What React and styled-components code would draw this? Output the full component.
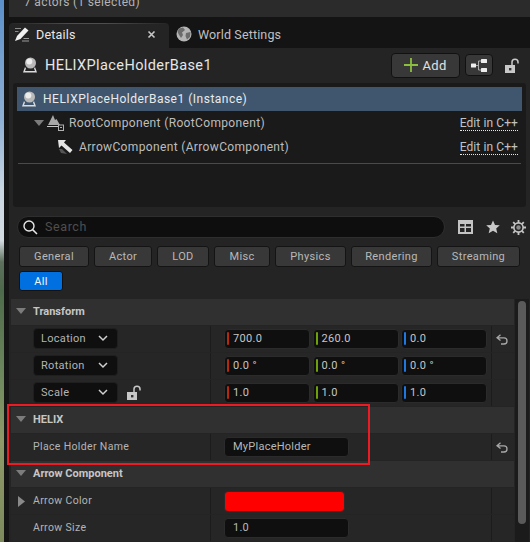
import React from "react";
import styled, { createGlobalStyle } from "styled-components";

const Global = createGlobalStyle`
  html, body { margin: 0; padding: 0; background: #151515; }
  body { font-family: Roboto, "Liberation Sans", sans-serif; width: 530px; height: 542px; overflow: hidden; }
  * { box-sizing: border-box; }
`;

const Page = styled.div`
  position: relative;
  display: flex;
  width: 530px;
  height: 542px;
  overflow: hidden;
`;
const Backdrop = styled.div`
  width: 4px;
  background: linear-gradient(180deg, #5b8fc9 0, #8fb0d4 120px, #c9d6e2 190px, #d5dde2 240px, #5c6f5c 262px, #4d6a4a 290px, #6f8a5e 380px, #8f9a68 440px, #7d8a5c 542px);
`;
const Gutter = styled.div`
  width: 5px;
  background: #151515;
`;
const Main = styled.div`
  flex: 1;
  display: flex;
  flex-direction: column;
  min-width: 0;
`;
const ActorBar = styled.div`
  height: 17px;
  background: #2b2b2b;
  color: #b4b4b4;
  font-size: 12px;
  letter-spacing: 0.3px;
  padding-left: 15px;
  line-height: 4px;
  overflow: hidden;
`;
const TabBar = styled.div`
  height: 31px;
  background: #141414;
  display: flex;
  align-items: flex-end;
`;
const Tab = styled.div`
  height: 25px;
  width: ${p => (p.$active ? 160 : 170)}px;
  display: flex;
  align-items: center;
  padding-left: ${p => (p.$active ? 5 : 7)}px;
  padding-bottom: 3px;
  gap: 6px;
  font-size: 12.5px;
  letter-spacing: ${p => (p.$active ? 0.2 : 0.15)}px;
  color: ${p => (p.$active ? "#e8e8e8" : "#c0c0c0")};
  background: ${p => (p.$active ? "#242424" : "transparent")};
  border-radius: 4px 4px 0 0;
  ${p => p.$active && "background-image: linear-gradient(90deg, #242424 0, #0b5fa8 40%, #0b5fa8 60%, #242424 100%); background-size: 100% 1px; background-repeat: no-repeat; background-color: #242424;"}
`;
const TabClose = styled.span`
  margin-left: auto;
  margin-right: 13px;
  display: flex;
`;
const Panel = styled.div`
  flex: 1;
  background: #242424;
  display: flex;
  flex-direction: column;
  min-height: 0;
`;
const Header = styled.div`
  height: 35px;
  display: flex;
  align-items: center;
  padding: 0 0 1px 12px;
`;
const ActorTitle = styled.div`
  font-size: 14.5px;
  letter-spacing: 0.4px;
  color: #e6e6e6;
  margin-left: 6px;
  flex: 1;
`;
const AddButton = styled.div`
  width: 69px;
  height: 25px;
  border: 1px solid #111;
  border-radius: 4px;
  background: #383838;
  color: #e0e0e0;
  font-size: 13px;
  letter-spacing: 0.3px;
  display: flex;
  align-items: center;
  justify-content: center;
  gap: 4px;
`;
const TreeButton = styled.div`
  width: 28px;
  height: 22px;
  margin-left: 5px;
  border: 1px solid #111;
  border-radius: 4px;
  background: #383838;
  display: flex;
  align-items: center;
  justify-content: center;
`;
const LockSlot = styled.div`
  width: 37px;
  padding-left: 11px;
  display: flex;
  align-items: center;
`;
const Tree = styled.div`
  height: 124px;
  margin: 0 4px;
  background: #1a1a1a;
  border-radius: 3px;
  padding: 4px 4px 0;
`;
const TreeRow = styled.div`
  height: 24px;
  display: flex;
  align-items: center;
  padding-left: ${p => p.$indent}px;
  padding-right: 4px;
  background: ${p => (p.$selected ? "#40566e" : "transparent")};
  color: ${p => (p.$selected ? "#eaeaea" : "#bdbdbd")};
  font-size: 12px;
  letter-spacing: ${p => (p.$selected ? 0.5 : 0.35)}px;
`;
const RowLabel = styled.span`
  flex: 1;
  margin-left: ${p => p.$gap}px;
  padding-bottom: 1px;
`;
const EditLink = styled.span`
  color: #c2c2c2;
  font-size: 12px;
  letter-spacing: 0.1px;
  line-height: 14px;
  border-bottom: 1px dotted #e8e8e8;
`;
const TreeRule = styled.div`
  height: 1px;
  margin: 4px 1px 0;
  background: #4a4a4a;
`;
const SearchRow = styled.div`
  display: flex;
  align-items: center;
  height: 22px;
  margin: 9px 0 0 8px;
`;
const SearchBox = styled.div`
  width: 428px;
  height: 22px;
  border-radius: 11px;
  background: #0e0e0e;
  border: 1px solid #2e2e2e;
  display: flex;
  align-items: center;
  padding-left: 5px;
  gap: 7px;
  color: #4e4e4e;
  font-size: 12.5px;
  letter-spacing: 0.6px;
`;
const SearchHint = styled.span`
  padding-bottom: 2px;
`;
const SearchTools = styled.div`
  display: flex;
  align-items: center;
  margin-left: 13px;
  gap: 13px;
`;
const Filters = styled.div`
  display: flex;
  flex-wrap: wrap;
  gap: 4px 5px;
  margin: 8px 0 0 10px;
`;
const FilterChip = styled.div`
  width: ${p => p.$w}px;
  height: ${p => (p.$on ? 20 : 21)}px;
  border-radius: 3px;
  border: 1px solid ${p => (p.$on ? "#111" : "#141414")};
  background: ${p => (p.$on ? "#0070e0" : "#383838")};
  color: ${p => (p.$on ? "#f4f4f4" : "#b8b8b8")};
  font-size: 11px;
  letter-spacing: 0.35px;
  display: flex;
  align-items: center;
  justify-content: center;
`;
const ListWrap = styled.div`
  flex: 1;
  display: flex;
  margin: 8px 0 0 2px;
  min-height: 0;
`;
const List = styled.div`
  width: 503px;
  display: flex;
  flex-direction: column;
  gap: 1px;
`;
const Track = styled.div`
  width: 14px;
  background: #1b1b1b;
  padding: 2px 3px 0;
  margin-left: 1px;
`;
const Thumb = styled.div`
  width: 8px;
  height: 223px;
  border-radius: 4px;
  background: #5a5a5a;
`;
const Section = styled.div`
  height: 26px;
  background: #303030;
  display: flex;
  align-items: center;
  padding: 0 0 2px 5px;
  gap: 7px;
  color: #c6c6c6;
  font-size: 11px;
  font-weight: 700;
  letter-spacing: 0;
`;
const Row = styled.div`
  height: 26px;
  display: grid;
  grid-template-columns: 200px 280px 23px;
  background: #262626;
  flex: none;
`;
const LabelCell = styled.div`
  position: relative;
  display: flex;
  align-items: center;
  padding: 0 0 1px 22px;
  gap: 8px;
  color: #b4b4b4;
  font-size: 10.5px;
  letter-spacing: 0.35px;
  border-right: 1px solid #1c1c1c;
`;
const Expander = styled.span`
  position: absolute;
  left: 7px;
  top: 8px;
  display: flex;
`;
const ValueCell = styled.div`
  display: flex;
  align-items: center;
  padding-left: 13px;
  gap: 2.5px;
`;
const ResetCell = styled.div`
  display: flex;
  align-items: center;
  justify-content: center;
  padding-right: 3px;
  border-left: 1px solid #1c1c1c;
`;
const Dropdown = styled.div`
  width: 85px;
  height: 21px;
  background: #0f0f0f;
  border: 1px solid #1f1f1f;
  border-radius: 4px;
  display: flex;
  align-items: center;
  justify-content: space-between;
  padding: 0 9px 1px 7px;
  color: #b4b4b4;
  font-size: 11px;
  letter-spacing: 0.3px;
`;
const NumField = styled.div`
  width: 86px;
  height: 20px;
  background: #0f0f0f;
  border: 1px solid #2b2b2b;
  border-radius: 4px;
  display: flex;
  align-items: center;
  padding: 0 0 1px 2px;
  gap: 4px;
  color: #c6c6c6;
  font-size: 11px;
  letter-spacing: 0.35px;
`;
const AxisTick = styled.span`
  width: 2px;
  height: 13px;
  background: ${p => p.$c};
  border-radius: 1px;
`;
const TextField = styled.div`
  width: 125px;
  height: 20px;
  background: #0f0f0f;
  border: 1px solid #2b2b2b;
  border-radius: 4px;
  display: flex;
  align-items: center;
  padding: 0 0 1px 8px;
  color: #b8b8b8;
  font-size: 11px;
  letter-spacing: 0.25px;
`;
const Swatch = styled.div`
  width: 121px;
  height: 21px;
  background: #ff0000;
  border: 1px solid #2b2b2b;
  border-radius: 4px;
`;
const Highlight = styled.div`
  position: absolute;
  left: 7px;
  top: 404px;
  width: 363px;
  height: 61px;
  border: 2px solid #ed1c24;
  pointer-events: none;
`;

const ActorIcon = () => (
  <svg width="18" height="18" viewBox="0 0 18 18">
    <circle cx="9.5" cy="7" r="5.5" fill="#b9b9b9" />
    <circle cx="8.3" cy="5.6" r="3" fill="#ececec" />
    <path d="M4 11 L2 16.5 H16 L14 11 L13 12.5 L14 15 H4 L5 12.5 Z" fill="#dcdcdc" />
  </svg>
);
const DetailsIcon = () => (
  <svg width="16" height="16" viewBox="0 0 16 16">
    <path d="M1 15 L3 10 L11 1.5 L14.5 4.5 L6.5 13 Z" fill="#f0f0f0" />
    <path d="M1 2.5 H7 M1 5.5 H4.5" stroke="#8a8a8a" strokeWidth="1" />
    <path d="M8 15 H15 M9.5 12.5 H15" stroke="#9a9a9a" strokeWidth="1" />
  </svg>
);
const Globe = () => (
  <svg width="16" height="16" viewBox="0 0 16 16">
    <circle cx="8" cy="8" r="7.5" fill="#b5b5b5" />
    <path d="M3 2.5 L7 1.5 L9 4 L6 6.5 L7 9 L5 12 L2.5 8 L1.5 5.5 Z M10 7 L14.5 6 L14 11 L11 13.5 L9.5 10 Z" fill="#6c6c6c" />
  </svg>
);
const CloseX = () => (
  <svg width="9" height="9" viewBox="0 0 9 9">
    <path d="M1.5 1.5 L7.5 7.5 M7.5 1.5 L1.5 7.5" stroke="#c8c8c8" strokeWidth="1.6" />
  </svg>
);
const Plus = () => (
  <svg width="14" height="14" viewBox="0 0 14 14">
    <path d="M7 0 V14 M0 7 H14" stroke="#8cbf3f" strokeWidth="1.8" />
  </svg>
);
const Hierarchy = () => (
  <svg width="16" height="13" viewBox="0 0 16 13">
    <rect x="0" y="4.5" width="5" height="4" fill="#eee" rx="0.5" />
    <rect x="10" y="0" width="6" height="4" fill="#eee" rx="0.5" />
    <rect x="10" y="9" width="6" height="4" fill="#eee" rx="0.5" />
    <path d="M5 6.5 H8 M10 2 H7.5 V11 H10" stroke="#aaa" fill="none" />
  </svg>
);
const LockOpen = () => (
  <svg width="15" height="15" viewBox="0 0 15 15">
    <path d="M1 7 H11 V15 H1 Z" fill="#c8c8c8" />
    <rect x="5" y="10" width="2.4" height="2.4" fill="#333" />
    <path d="M8 7 V4 C8 0.3 14 0.3 14 4 V5.5" stroke="#c8c8c8" strokeWidth="1.5" fill="none" />
  </svg>
);
const TriDown = ({ c = "#7c7c7c", w = 10 }) => (
  <svg width={w} height="6" viewBox="0 0 10 6">
    <path d="M0 0 H10 L5 6 Z" fill={c} />
  </svg>
);
const TriRight = () => (
  <svg width="7" height="11" viewBox="0 0 7 11">
    <path d="M0 0 L7 5.5 L0 11 Z" fill="#8a8a8a" />
  </svg>
);
const RootIcon = () => (
  <svg width="17" height="16" viewBox="0 0 17 16" style={{ marginLeft: 3 }}>
    <path d="M1 10 L6 0 L8 5 L9.5 4 L13 10 Z" fill="#a8a8a8" />
    <path d="M0 11 H11 V12 H0 Z" fill="#c8c8c8" />
    <rect x="11.5" y="10" width="5" height="5.5" fill="#1a1a1a" stroke="#b0b0b0" />
    <path d="M13 12.5 H15" stroke="#b0b0b0" />
  </svg>
);
const ArrowIcon = () => (
  <svg width="15" height="15" viewBox="0 0 15 15">
    <path d="M0 0 H8 L6 2.5 L14.5 10 L12 13 L3.5 5.5 L1 8 Z" fill="#e4e4e4" />
    <path d="M1 9 L3 13 L9 14 L4 9 Z" fill="#555" />
  </svg>
);
const SearchIcon = () => (
  <svg width="15" height="15" viewBox="0 0 15 15">
    <circle cx="6" cy="6" r="5" stroke="#e6e6e6" strokeWidth="1.4" fill="none" />
    <path d="M9.6 9.6 L14 14" stroke="#e6e6e6" strokeWidth="1.5" />
  </svg>
);
const TableIcon = () => (
  <svg width="15" height="14" viewBox="0 0 15 14">
    <path fillRule="evenodd" d="M0 0 H15 V14 H0 Z M2 4 V6.5 H6.5 V4 Z M8 4 V6.5 H13 V4 Z M2 8 V12 H6.5 V8 Z M8 8 V12 H13 V8 Z" fill="#c4c4c4" />
  </svg>
);
const StarIcon = () => (
  <svg width="14" height="14" viewBox="0 0 14 14">
    <path d="M7 0.5 L9 5 L13.8 5.3 L10.2 8.5 L11.3 13.3 L7 10.7 L2.7 13.3 L3.8 8.5 L0.2 5.3 L5 5 Z" fill="#c8c8c8" />
  </svg>
);
const GearIcon = () => (
  <svg width="15" height="15" viewBox="0 0 15 15" style={{ marginLeft: -2 }}>
    <circle cx="7.5" cy="7.5" r="4.6" fill="none" stroke="#c4c4c4" strokeWidth="1.6" />
    <circle cx="7.5" cy="7.5" r="2.2" fill="#8a8a8a" />
    <path d="M7.5 0 V3 M7.5 12 V15 M0 7.5 H3 M12 7.5 H15 M2.2 2.2 L4.2 4.2 M10.8 10.8 L12.8 12.8 M12.8 2.2 L10.8 4.2 M4.2 10.8 L2.2 12.8" stroke="#c4c4c4" strokeWidth="1.8" />
  </svg>
);
const Chevron = () => (
  <svg width="10" height="7" viewBox="0 0 10 7">
    <path d="M1 1 L5 5 L9 1" stroke="#d0d0d0" strokeWidth="1.5" fill="none" />
  </svg>
);
const ResetIcon = () => (
  <svg width="12" height="11" viewBox="0 0 12 11">
    <path d="M4.5 0.8 L1 3.8 L4.5 6.6 M1 3.8 H8 C12 3.8 12 10 8 10 H5" stroke="#a8a8a8" strokeWidth="1.3" fill="none" />
  </svg>
);

const FILTERS = [["General", 70], ["Actor", 58], ["LOD", 52], ["Misc", 56], ["Physics", 71], ["Rendering", 81], ["Streaming", 83]];
const X = "#b52a0c", Y = "#6ea00c", Z = "#1f77e0";

const Vec = ({ v }) => (
  <>
    <NumField><AxisTick $c={X} />{v[0]}</NumField>
    <NumField><AxisTick $c={Y} />{v[1]}</NumField>
    <NumField><AxisTick $c={Z} />{v[2]}</NumField>
  </>
);

export default function App() {
  return (
    <Page>
      <Global />
      <Backdrop />
      <Gutter />
      <Main>
        <ActorBar>7 actors (1 selected)</ActorBar>
        <TabBar>
          <Tab $active><DetailsIcon />Details<TabClose><CloseX /></TabClose></Tab>
          <Tab><Globe />World Settings</Tab>
        </TabBar>
        <Panel>
          <Header>
            <ActorIcon />
            <ActorTitle>HELIXPlaceHolderBase1</ActorTitle>
            <AddButton><Plus />Add</AddButton>
            <TreeButton><Hierarchy /></TreeButton>
            <LockSlot><LockOpen /></LockSlot>
          </Header>
          <Tree>
            <TreeRow $selected $indent={3}><ActorIcon /><RowLabel $gap={5}>HELIXPlaceHolderBase1 (Instance)</RowLabel></TreeRow>
            <TreeRow $indent={17}><TriDown /><RootIcon /><RowLabel $gap={5}>RootComponent (RootComponent)</RowLabel><EditLink>Edit in C++</EditLink></TreeRow>
            <TreeRow $indent={41}><ArrowIcon /><RowLabel $gap={6}>ArrowComponent (ArrowComponent)</RowLabel><EditLink>Edit in C++</EditLink></TreeRow>
            <TreeRule />
          </Tree>
          <SearchRow>
            <SearchBox><SearchIcon /><SearchHint>Search</SearchHint></SearchBox>
            <SearchTools><TableIcon /><StarIcon /><GearIcon /></SearchTools>
          </SearchRow>
          <Filters>
            {FILTERS.map(([n, w]) => <FilterChip key={n} $w={w}>{n}</FilterChip>)}
            <FilterChip $on $w={44}>All</FilterChip>
          </Filters>
          <ListWrap>
            <List>
              <Section><TriDown />Transform</Section>
              <Row>
                <LabelCell><Dropdown>Location<Chevron /></Dropdown></LabelCell>
                <ValueCell><Vec v={["700.0", "260.0", "0.0"]} /></ValueCell>
                <ResetCell><ResetIcon /></ResetCell>
              </Row>
              <Row>
                <LabelCell><Dropdown>Rotation<Chevron /></Dropdown></LabelCell>
                <ValueCell><Vec v={["0.0 °", "0.0 °", "0.0 °"]} /></ValueCell>
                <ResetCell />
              </Row>
              <Row>
                <LabelCell><Dropdown>Scale<Chevron /></Dropdown><LockOpen /></LabelCell>
                <ValueCell><Vec v={["1.0", "1.0", "1.0"]} /></ValueCell>
                <ResetCell />
              </Row>
              <Section><TriDown />HELIX</Section>
              <Row>
                <LabelCell>Place Holder Name</LabelCell>
                <ValueCell><TextField>MyPlaceHolder</TextField></ValueCell>
                <ResetCell><ResetIcon /></ResetCell>
              </Row>
              <Section><TriDown />Arrow Component</Section>
              <Row>
                <LabelCell><Expander><TriRight /></Expander>Arrow Color</LabelCell>
                <ValueCell><Swatch /></ValueCell>
                <ResetCell />
              </Row>
              <Row>
                <LabelCell>Arrow Size</LabelCell>
                <ValueCell><TextField>1.0</TextField></ValueCell>
                <ResetCell />
              </Row>
            </List>
            <Track><Thumb /></Track>
          </ListWrap>
        </Panel>
      </Main>
      <Highlight />
    </Page>
  );
}
